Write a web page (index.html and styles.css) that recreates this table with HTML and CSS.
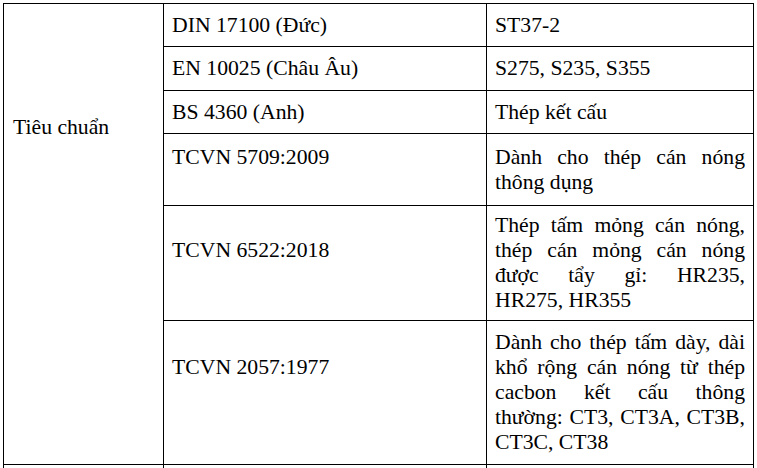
FILE: index.html
```html
<!DOCTYPE html>
<html lang="vi">
<head>
<meta charset="utf-8">
<title>Tiêu chuẩn</title>
<link rel="stylesheet" href="styles.css">
</head>
<body>
<table class="spec">
  <colgroup>
    <col class="col-a">
    <col class="col-b">
    <col class="col-c">
  </colgroup>
  <tbody>
    <tr class="r1">
      <td class="label" rowspan="6">Tiêu chuẩn</td>
      <td>DIN 17100 (Đức)</td>
      <td class="desc">ST37-2</td>
    </tr>
    <tr class="r2">
      <td>EN 10025 (Châu Âu)</td>
      <td class="desc">S275, S235, S355</td>
    </tr>
    <tr class="r3">
      <td>BS 4360 (Anh)</td>
      <td class="desc">Thép kết cấu</td>
    </tr>
    <tr class="r4">
      <td class="gap-1">TCVN 5709:2009</td>
      <td class="desc">Dành cho thép cán nóng thông dụng</td>
    </tr>
    <tr class="r5">
      <td class="gap-1">TCVN 6522:2018</td>
      <td class="desc">Thép tấm mỏng cán nóng, thép cán mỏng cán nóng được tẩy gỉ: HR235, HR275, HR355</td>
    </tr>
    <tr class="r6">
      <td class="gap-2">TCVN 2057:1977</td>
      <td class="desc">Dành cho thép tấm dày, dài khổ rộng cán nóng từ thép cacbon kết cấu thông thường: CT3, CT3A, CT3B, CT3C, CT38</td>
    </tr>
    <tr class="next">
      <td></td>
      <td></td>
      <td></td>
    </tr>
  </tbody>
</table>
</body>
</html>
```
FILE: styles.css
```css
html, body {
  margin: 0;
  padding: 0;
  background: #fff;
  overflow: hidden;
}

body {
  padding: 3px 0 0 3px;
  font-family: "Liberation Serif", "Times New Roman", serif;
  font-size: 21.7px;
  line-height: 25px;
  color: #000;
}

.spec {
  border-collapse: collapse;
  table-layout: fixed;
  width: 750px;
}

.col-a { width: 160px; }
.col-b { width: 323px; }
.col-c { width: 267px; }

.spec td {
  border: 1px solid #000;
  padding: 7px 8px;
  vertical-align: middle;
}

.r1 { height: 43px; }
.r2 { height: 44px; }
.r3 { height: 43px; }
.r4 { height: 72px; }
.r5 { height: 115px; }
.r6 { height: 144px; }

.spec td.label {
  vertical-align: top;
  padding-top: 111px;
  padding-left: 9px;
}

.spec td.desc {
  text-align: justify;
}

.spec td.gap-1 { padding-bottom: 32px; }
.spec td.gap-2 { padding-bottom: 57px; }

.spec tr.next td {
  height: 40px;
}
```
